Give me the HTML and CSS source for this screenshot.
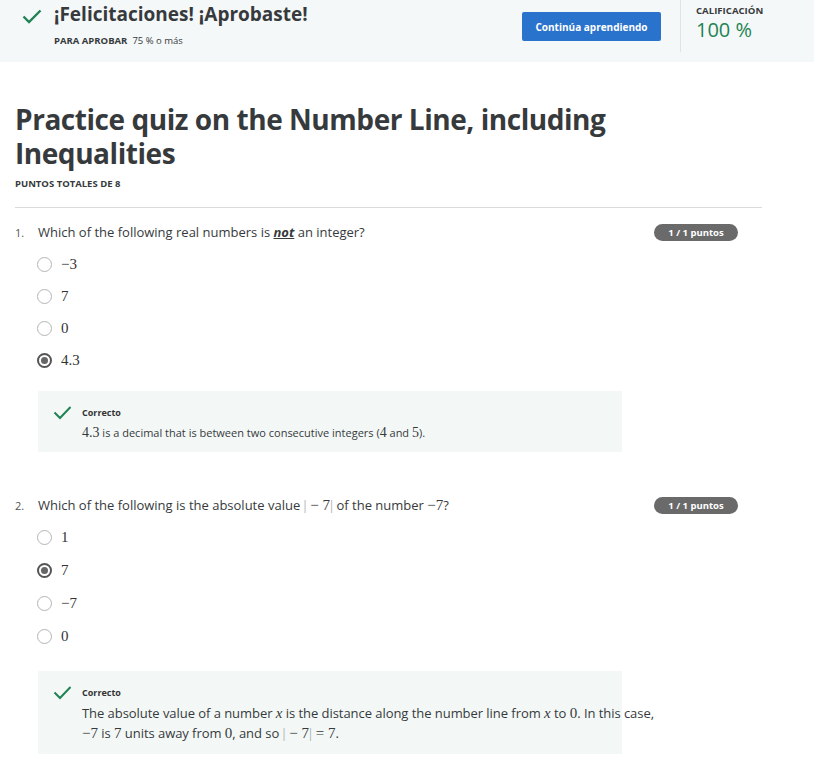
FILE: index.html
```html
<!DOCTYPE html>
<html lang="es">
<head>
<meta charset="utf-8">
<title>Practice quiz</title>
<link rel="stylesheet" href="styles.css">
</head>
<body>
<header class="banner">
  <svg class="banner-check" width="20" height="15" viewBox="0 0 20 15"><path d="M1.5 7.5 L7 13 L18.5 1.5" fill="none" stroke="#1f8354" stroke-width="2.4"/></svg>
  <div class="banner-text">
    <h1 class="banner-title">¡Felicitaciones! ¡Aprobaste!</h1>
    <div class="banner-sub"><span class="strong">PARA APROBAR</span><span>75 % o más</span></div>
  </div>
  <div class="spacer"></div>
  <button class="btn">Continúa aprendiendo</button>
  <div class="vdivider"></div>
  <div class="grade">
    <div class="grade-label">CALIFICACIÓN</div>
    <div class="grade-value">100 %</div>
  </div>
</header>

<main class="content">
  <h2 class="quiz-title">Practice quiz on the Number Line, including Inequalities</h2>
  <div class="total">PUNTOS TOTALES DE 8</div>
  <hr class="rule">

  <section class="question">
    <div class="q-head">
      <div class="q-text"><span class="q-num">1.</span><span>Which of the following real numbers is <b class="em">not</b> an integer?</span></div>
      <span class="badge">1 / 1 puntos</span>
    </div>
    <ul class="options">
      <li class="option"><span class="radio"></span><span class="math">−3</span></li>
      <li class="option"><span class="radio"></span><span class="math">7</span></li>
      <li class="option"><span class="radio"></span><span class="math">0</span></li>
      <li class="option"><span class="radio checked"></span><span class="math">4.3</span></li>
    </ul>
    <div class="feedback">
      <svg class="fb-check" width="19" height="15" viewBox="0 0 19 15"><path d="M1.5 7.5 L7 13 L17.5 2" fill="none" stroke="#1f8354" stroke-width="2"/></svg>
      <div class="fb-body">
        <div class="fb-title">Correcto</div>
        <div class="fb-text small"><span class="math">4.3</span> is a decimal that is between two consecutive integers (<span class="math">4</span> and <span class="math">5</span>).</div>
      </div>
    </div>
  </section>

  <section class="question q2">
    <div class="q-head">
      <div class="q-text"><span class="q-num">2.</span><span>Which of the following is the absolute value <span class="math"><span class="bar">|</span> − 7<span class="bar">|</span></span> of the number <span class="math">−7</span>?</span></div>
      <span class="badge">1 / 1 puntos</span>
    </div>
    <ul class="options">
      <li class="option"><span class="radio"></span><span class="math">1</span></li>
      <li class="option"><span class="radio checked"></span><span class="math">7</span></li>
      <li class="option"><span class="radio"></span><span class="math">−7</span></li>
      <li class="option"><span class="radio"></span><span class="math">0</span></li>
    </ul>
    <div class="feedback">
      <svg class="fb-check" width="19" height="15" viewBox="0 0 19 15"><path d="M1.5 7.5 L7 13 L17.5 2" fill="none" stroke="#1f8354" stroke-width="2"/></svg>
      <div class="fb-body">
        <div class="fb-title">Correcto</div>
        <div class="fb-text nowrap">The absolute value of a number <i class="math">x</i> is the distance along the number line from <i class="math">x</i> to <span class="math">0</span>. In this case,<br><span class="math">−7</span> is <span class="math">7</span> units away from <span class="math">0</span>, and so <span class="math"><span class="bar">|</span> − 7<span class="bar">|</span> = 7</span>.</div>
      </div>
    </div>
  </section>
</main>
</body>
</html>
```

FILE: styles.css
```css
* { box-sizing: border-box; }
html, body { margin: 0; padding: 0; background: #ffffff; }
body {
  font-family: "Open Sans", "Liberation Sans", sans-serif;
  color: #373a3c;
  width: 814px;
  height: 766px;
  overflow: hidden;
}

.banner {
  display: flex;
  align-items: flex-start;
  height: 62px;
  background: #f4f8f8;
  padding-left: 22px;
}
.banner-check { margin-top: 9px; flex: none; }
.banner-text { margin-left: 12px; margin-top: 2px; }
.banner-title {
  margin: 0;
  font-size: 19px;
  line-height: 24px;
  font-weight: 700;
  color: #373a3c;
}
.banner-sub {
  margin-top: 8px;
  font-size: 9.5px;
  line-height: 14px;
  color: #373a3c;
  display: flex;
  gap: 5px;
}
.strong { font-weight: 700; }
.spacer { flex: 1; }
.btn {
  margin-top: 12px;
  width: 139px;
  height: 29px;
  border: none;
  border-radius: 2px;
  background: #2a73cc;
  color: #fff;
  font-family: "Open Sans", "Liberation Sans", sans-serif;
  font-size: 10px;
  font-weight: 700;
  padding: 0;
}
.vdivider {
  margin-left: 19px;
  width: 1px;
  height: 52px;
  background: #dfe3e3;
}
.grade { margin-left: 15px; width: 118px; padding-top: 4px; }
.grade-label {
  font-size: 9.6px;
  line-height: 13px;
  font-weight: 700;
  color: #373a3c;
}
.grade-value {
  margin-top: 1px;
  font-size: 20px;
  line-height: 24px;
  color: #1f8354;
}

.content { padding-left: 15px; width: 762px; }
.quiz-title {
  margin: 40px 0 0;
  font-size: 28px;
  line-height: 34px;
  letter-spacing: -0.45px;
  font-weight: 700;
  color: #373a3c;
  width: 640px;
}
.total {
  margin-top: 8px;
  font-size: 9.5px;
  line-height: 12px;
  font-weight: 700;
  color: #373a3c;
}
.rule {
  margin: 17px 0 0;
  border: none;
  border-top: 1px solid #dadada;
  height: 0;
}

.question { margin-top: 14px; }
.question.q2 { margin-top: 43px; }
.q-head {
  display: flex;
  justify-content: space-between;
  align-items: center;
  padding-right: 24px;
  height: 20px;
}
.q-text {
  display: flex;
  align-items: baseline;
  font-size: 13px;
  line-height: 20px;
  color: #373a3c;
}
.q-num { width: 23px; font-size: 11px; color: #555; }
.em { font-style: italic; text-decoration: underline; font-weight: 700; }
.badge {
  width: 84px;
  height: 17px;
  border-radius: 9px;
  background: #6a6a6a;
  color: #fff;
  font-size: 9.5px;
  font-weight: 700;
  line-height: 17px;
  text-align: center;
}

.math {
  font-family: "Liberation Serif", "DejaVu Serif", serif;
  font-size: 15px;
  font-style: normal;
  letter-spacing: 0;
}
i.math { font-style: italic; }
.bar { color: #aaa; }

.options {
  list-style: none;
  margin: 6px 0 0;
  padding: 0 0 0 22px;
}
.option {
  display: flex;
  align-items: center;
  height: 32px;
  color: #333;
}
.q2 .option { height: 33px; }
.radio {
  width: 15px;
  height: 15px;
  border-radius: 50%;
  border: 1.5px solid #b5b5b5;
  margin-right: 9px;
  display: flex;
  align-items: center;
  justify-content: center;
  flex: none;
}
.radio.checked { border: 2px solid #555; }
.radio.checked::after {
  content: "";
  width: 7px;
  height: 7px;
  border-radius: 50%;
  background: #666;
}

.feedback {
  display: flex;
  align-items: flex-start;
  margin: 15px 0 0 23px;
  width: 584px;
  background: #f3f8f7;
  padding: 15px 0 9px 15px;
}
.q2 .feedback { margin-top: 18px; padding-bottom: 11px; }
.fb-check { margin-top: -1px; flex: none; }
.fb-body { margin-left: 10px; }
.fb-title {
  font-size: 9px;
  line-height: 14px;
  font-weight: 700;
  color: #333;
}
.fb-text {
  margin-top: 3px;
  font-size: 13px;
  line-height: 20px;
  color: #373a3c;
}
.fb-text.small { font-size: 11px; }
.fb-text.small .math { font-size: 14px; }
.fb-text.nowrap { white-space: nowrap; letter-spacing: -0.05px; }
```
